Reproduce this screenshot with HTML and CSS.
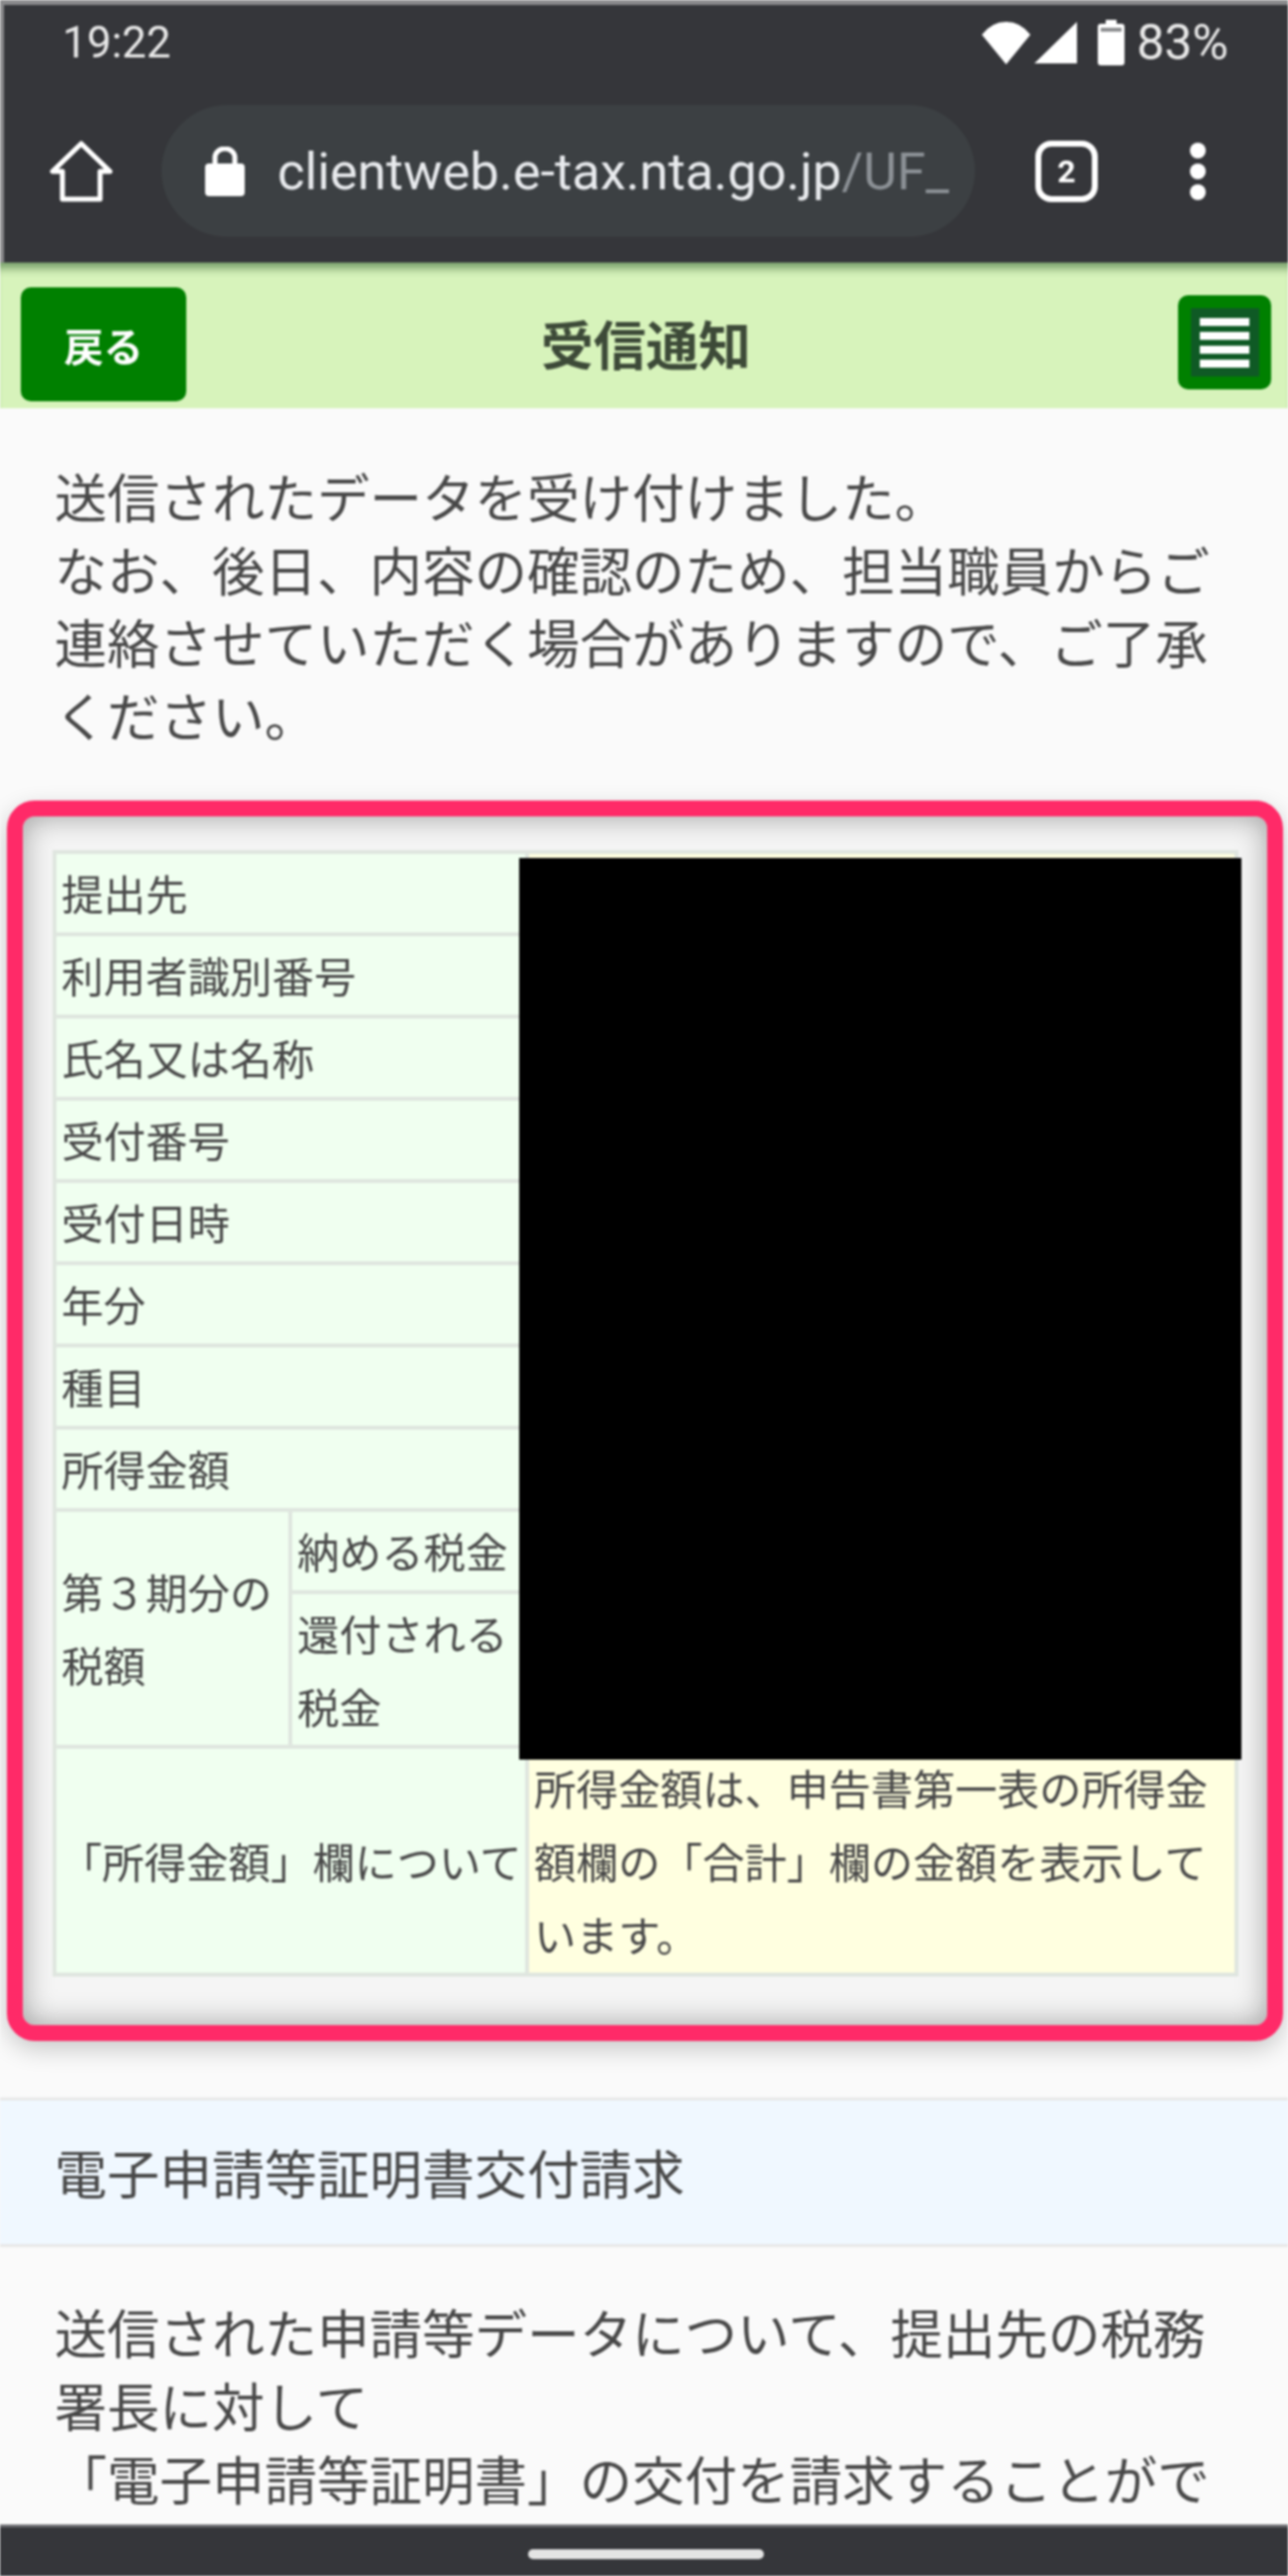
FILE: index.html
```html
<!DOCTYPE html>
<html lang="ja">
<head>
<meta charset="utf-8">
<title>受信通知</title>
<link rel="stylesheet" href="styles.css">
</head>
<body>
<div class="screen">
  <div class="chrome">
    <div class="status">
      <span class="clock">19:22</span>
      <div class="status-right">
        <svg class="ic-wifi" viewBox="0 0 49 44"><path d="M24.500 44 0 14Q10 1 24.500 1T49 14z" fill="#fff"/></svg>
        <svg class="ic-signal" viewBox="0 0 43 42"><path d="M43 0v42H0z" fill="#fff"/></svg>
        <svg class="ic-batt" viewBox="0 0 27 46"><path d="M8 0h11v4h5q3 0 3 3v36q0 3-3 3H3q-3 0-3-3V7q0-3 3-3h5z" fill="#fff"/><rect x="3" y="8" width="21" height="4" fill="#8d8e90"/></svg>
        <span class="pct">83%</span>
      </div>
    </div>
    <div class="toolbar">
      <svg class="ic-home" viewBox="0 0 64 64"><path d="M32 4 3 32h10v28h38V32h10z" fill="none" stroke="#fff" stroke-width="5" stroke-linejoin="round"/></svg>
      <div class="omnibox">
        <svg class="ic-lock" viewBox="0 0 40 50"><path d="M10 20v-9a10 9 0 0 1 20 0v9" fill="none" stroke="#fff" stroke-width="5"/><rect y="17" width="40" height="33" rx="4" fill="#fff"/></svg>
        <span class="url">clientweb.e-tax.nta.go.jp<span class="url-dim">/UF_</span></span>
      </div>
      <div class="tabs">2</div>
      <div class="dots"><i></i><i></i><i></i></div>
    </div>
  </div>
  <header class="pagehead">
    <a class="back">戻る</a>
    <h1>受信通知</h1>
    <a class="menu"><span class="menu-inner"><i></i><i></i><i></i><i></i></span></a>
  </header>
  <main class="content">
    <p class="lead">送信されたデータを受け付けました。<br>なお、後日、内容の確認のため、担当職員からご連絡させていただく場合がありますので、ご了承ください。</p>
    <section class="card">
      <table class="info">
        <colgroup><col class="c1"><col class="c2"><col class="c3"></colgroup>
        <tr><th colspan="2">提出先</th><td rowspan="11"></td></tr>
        <tr><th colspan="2">利用者識別番号</th></tr>
        <tr><th colspan="2">氏名又は名称</th></tr>
        <tr><th colspan="2">受付番号</th></tr>
        <tr><th colspan="2">受付日時</th></tr>
        <tr><th colspan="2">年分</th></tr>
        <tr><th colspan="2">種目</th></tr>
        <tr><th colspan="2">所得金額</th></tr>
        <tr><th rowspan="2">第３期分の税額</th><th>納める税金</th></tr>
        <tr><th class="two">還付される税金</th></tr>
        <tr class="spacer"><th colspan="2" rowspan="2" class="center">「所得金額」欄について</th></tr>
        <tr><td class="note">所得金額は、申告書第一表の所得金額欄の「合計」欄の金額を表示しています。</td></tr>
      </table>
      <div class="redact"></div>
    </section>
    <h2 class="band">電子申請等証明書交付請求</h2>
    <p class="body2">送信された申請等データについて、提出先の税務署長に対して<br>「電子申請等証明書」の交付を請求することがで</p>
  </main>
  <div class="navbar"><span class="pill"></span></div>
</div>
</body>
</html>
```
FILE: styles.css
```css
* { box-sizing: border-box; }
html, body { margin: 0; padding: 0; background: #fafafa; }
.screen {
  width: 1300px; height: 2600px; overflow: hidden; position: relative;
  display: flex; flex-direction: column;
  font-family: "Noto Sans CJK JP", "Noto Sans", sans-serif;
  color: #484848; background: #fafafa;
  filter: blur(1.2px);
}
.chrome { height: 265px; flex: none; background: #35363a; border-top: 5px solid #8a8a8c; color: #fff; font-family: Roboto, sans-serif; box-shadow: inset 4px 0 0 #8a8a8c; }
.status { height: 75px; padding: 0 60px 0 63px; display: flex; align-items: center; justify-content: space-between; }
.clock { color: #e8e8e8; font-size: 44px; }
.status-right { display: flex; align-items: center; }
.pct { margin-left: 12px; color: #e8e8e8; font-size: 50px; line-height: 1; }
.ic-wifi { width: 49px; height: 44px; }
.ic-signal { width: 43px; height: 42px; margin-left: 4px; }
.ic-batt { width: 27px; height: 46px; margin-left: 21px; }
.toolbar { height: 185px; display: flex; align-items: center; }
.ic-home { width: 64px; height: 64px; margin-left: 50px; flex: none; }
.omnibox { width: 821px; height: 133px; margin-left: 49px; border-radius: 67px; background: #3c4043; display: flex; align-items: center; padding-left: 44px; flex: none; }
.ic-lock { width: 40px; height: 50px; flex: none; }
.url { margin-left: 33px; font-size: 52.5px; color: #e8eaed; white-space: nowrap; }
.url-dim { color: #8c9196; }
.tabs { width: 63px; height: 62px; margin-left: 61px; border: 6px solid #fff; border-radius: 16px; font-size: 32px; font-weight: 700; display: flex; align-items: center; justify-content: center; flex: none; }
.dots { margin-left: 93px; display: flex; flex-direction: column; gap: 5px; flex: none; }
.dots i { display: block; width: 16px; height: 16px; border-radius: 50%; background: #fff; }
.pagehead { height: 147px; flex: none; background: #d7f3bb; display: grid; grid-template-columns: 1fr auto 1fr; align-items: center; padding: 0 17px 0 21px; box-shadow: inset 0 12px 8px -6px rgba(40,90,40,.55); }
.back { justify-self: start; width: 167px; height: 115px; background: #008000; color: #fff; border-radius: 10px; font-size: 40px; font-weight: 700; display: flex; align-items: center; justify-content: center; margin-top: 18px; }
.pagehead h1 { margin: 16px 0 0; text-align: center; font-size: 53px; font-weight: 700; color: #3d4a38; line-height: 1; }
.menu { justify-self: end; width: 94px; height: 95px; background: #008000; border-radius: 10px; display: flex; align-items: center; justify-content: center; margin-top: 14px; }
.menu-inner { width: 69px; height: 69px; background: #0f5a25; display: flex; flex-direction: column; align-items: center; justify-content: center; gap: 6px; }
.menu-inner i { display: block; width: 50px; height: 8px; background: #fff; }
.content { flex: 1; min-height: 0; overflow: hidden; }
.lead { margin: 0; padding: 52px 50px 0 55px; font-size: 53px; line-height: 73.7px; }
.card { position: relative; margin: 49px 5px 0 7px; height: 1252px; border: 16px solid #ff2a68; border-radius: 28px; box-shadow: inset 0 0 30px rgba(0,0,0,.36), 0 8px 24px rgba(0,0,0,.2); padding: 34px 12px 0 30px; background: #f5f5f5; }
.info { border-collapse: collapse; table-layout: fixed; width: 1197px; font-size: 42.5px; line-height: 74px; }
.c1 { width: 238px; } .c2 { width: 239px; }
.info th, .info td { border: 4px solid #dfe6df; font-weight: 400; text-align: left; vertical-align: middle; padding: 0 5px; background: #f0fff0; }
.info th { height: 83px; }
.info .two { padding-top: 2px; padding-bottom: 2px; }
.info td { background: #ffffe0; }
.info .center { text-align: center; padding: 0; height: 230px; }
.spacer th { height: 230px; }
.info .note { height: 230px; padding: 0 5px; }
.redact { position: absolute; left: 501px; top: 42px; width: 729px; height: 910px; background: #000; }
.band { margin: 57px 0 0; height: 151px; background: #f0f8ff; border-top: 3px solid #e8e8e8; border-bottom: 3px solid #e8e8e8; font-size: 53px; font-weight: 400; padding-left: 55px; display: flex; align-items: center; }
.body2 { margin: 0; padding: 48px 50px 0 55px; font-size: 53px; line-height: 74px; }
.navbar { height: 52px; flex: none; background: #35363a; border-top: 3px solid #6b6c70; display: flex; justify-content: center; padding-top: 22px; }
.pill { width: 238px; height: 10px; background: #e4e4e4; border-radius: 5px; margin-left: 4px; }
```
